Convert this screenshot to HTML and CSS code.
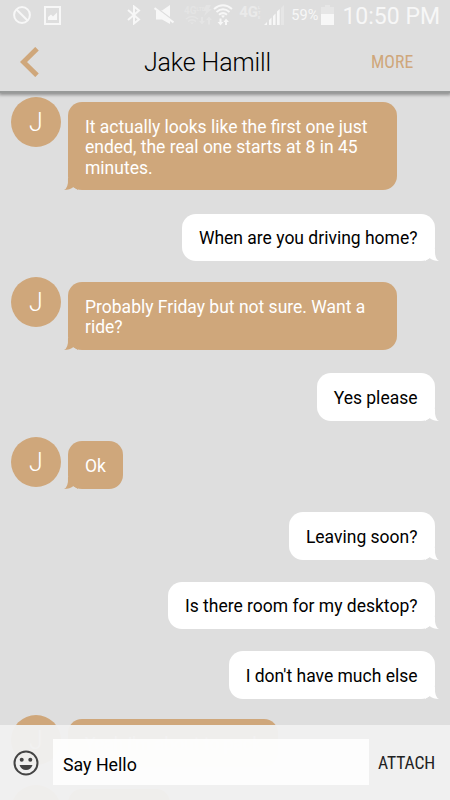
FILE: index.html
```html
<!DOCTYPE html>
<html lang="en">
<head>
    <meta charset="UTF-8">
    <meta name="viewport" content="width=device-width, initial-scale=1.0">
    <title>Jake Hamill</title>
    <link rel="stylesheet" href="styles.css">
</head>
<body>
    <div class="screen">
        <header class="header">
            <div class="status-bar">
                <svg class="icon-block" width="18" height="18" viewBox="0 0 18 18"><circle cx="9" cy="9" r="7.9"/><path d="M3.5 3.5L14.5 14.5"/></svg>
                <svg class="icon-image" width="17" height="19" viewBox="0 0 17 19"><path fill-rule="evenodd" d="M0 0H17V19H0ZM2 2V17H15V2Z"/><path d="M4 14V11L7 8.5L9 10.5L13 6.5V14Z"/></svg>
                <svg class="icon-bluetooth" width="14" height="20" viewBox="0 0 14 20"><path d="M1 5L12 14.5L7 18.5V1.5L12 5.5L1 15"/></svg>
                <svg class="icon-mute" width="20" height="20" viewBox="0 0 20 20"><path d="M2 5.500H8L16 0V19L8 14.500H2Z"/><path class="gap" d="M0 1.200L20 16.200"/><path class="slash" d="M.5 3L19.500 17.500"/></svg>
                <div class="booster">
                    <span>4G<small>LTE</small></span>
                    <svg width="29" height="20" viewBox="0 0 29 20"><path class="fill" d="M22 0H27L25 4H28L20 11L22 6H19Z"/><path d="M2 14Q8 9 14 14M4 16.5Q8 13 12 16.5"/><path class="fill" d="M8 19.5L6 17.5H10ZM17 12H19V16H21L18 19.5L15 16H17ZM24 19.5H26V15H28L25 11.5L22 15H24Z"/></svg>
                </div>
                <svg class="icon-wifi" width="20" height="22" viewBox="0 0 20 22"><path d="M1 5Q10 -2.500 19 5M3.500 8Q10 2.500 16.500 8M6 10.800Q10 7.500 14 10.800"/><path class="fill" d="M10 14L8 11.800Q10 10.500 12 11.800ZM6.500 18V14.500H8.500V18H10.500L7.500 21.500L4.500 18ZM12 21V18H10.500L13 14.500L16 18H14V21Z"/></svg>
                <div class="network">4G<span><i>L</i><i>T</i><i>E</i></span></div>
                <svg class="icon-signal" width="20" height="20" viewBox="0 0 20 20"><path d="M0 20L3 17V20ZM5 20V15L7.5 12.5V20ZM9 20V11L11.5 8.5V20ZM13 20V6.5L15.7 4V20Z"/><path opacity=".35" d="M17 20V3L20 0V20Z"/></svg>
                <span class="battery-level">59%</span>
                <svg class="icon-battery" width="13" height="20" viewBox="0 0 13 20"><path opacity=".35" d="M4 0H9V2H13V9H0V2H4Z"/><path d="M0 9H13V20H0Z"/></svg>
                <span class="clock">10:50 PM</span>
            </div>
            <div class="nav">
                <svg class="back" width="19" height="30" viewBox="0 0 19 30"><path d="M17 1.700L3.500 15L17 28.300"/></svg>
                <h1>Jake Hamill</h1>
                <a class="more">MORE</a>
            </div>
        </header>

        <main class="messages">
            <div class="row them">
                <div class="avatar">J</div>
                <div class="bubble">It actually looks like the first one just ended, the real one starts at 8 in 45 minutes.<svg class="tail" width="14" height="12" viewBox="0 0 14 12"><path d="M4 0Q4.500 10 0 12Q6 12 9.500 9L14 12V0Z"/></svg></div>
            </div>
            <div class="row me">
                <div class="bubble">When are you driving home?<svg class="tail" width="14" height="12" viewBox="0 0 14 12"><path d="M4 0Q4.500 10 0 12Q6 12 9.500 9L14 12V0Z"/></svg></div>
            </div>
            <div class="row them">
                <div class="avatar">J</div>
                <div class="bubble">Probably Friday but not sure. Want a ride?<svg class="tail" width="14" height="12" viewBox="0 0 14 12"><path d="M4 0Q4.500 10 0 12Q6 12 9.500 9L14 12V0Z"/></svg></div>
            </div>
            <div class="row me">
                <div class="bubble">Yes please<svg class="tail" width="14" height="12" viewBox="0 0 14 12"><path d="M4 0Q4.500 10 0 12Q6 12 9.500 9L14 12V0Z"/></svg></div>
            </div>
            <div class="row them">
                <div class="avatar">J</div>
                <div class="bubble">Ok<svg class="tail" width="14" height="12" viewBox="0 0 14 12"><path d="M4 0Q4.500 10 0 12Q6 12 9.500 9L14 12V0Z"/></svg></div>
            </div>
            <div class="row me">
                <div class="bubble">Leaving soon?<svg class="tail" width="14" height="12" viewBox="0 0 14 12"><path d="M4 0Q4.500 10 0 12Q6 12 9.500 9L14 12V0Z"/></svg></div>
            </div>
            <div class="row me">
                <div class="bubble">Is there room for my desktop?<svg class="tail" width="14" height="12" viewBox="0 0 14 12"><path d="M4 0Q4.500 10 0 12Q6 12 9.500 9L14 12V0Z"/></svg></div>
            </div>
            <div class="row me">
                <div class="bubble">I don't have much else<svg class="tail" width="14" height="12" viewBox="0 0 14 12"><path d="M4 0Q4.500 10 0 12Q6 12 9.500 9L14 12V0Z"/></svg></div>
            </div>
            <div class="row them last">
                <div class="avatar">J</div>
                <div class="bubble">Yeah I'm about to pack<svg class="tail" width="14" height="12" viewBox="0 0 14 12"><path d="M4 0Q4.500 10 0 12Q6 12 9.500 9L14 12V0Z"/></svg></div>
            </div>
            <div class="row them">
                <div class="avatar"></div>
                <div class="bubble loading"></div>
            </div>
        </main>

        <footer class="composer">
            <svg class="smiley" width="26" height="26" viewBox="0 0 26 26"><circle class="face" cx="13" cy="13" r="11.500"/><circle cx="8.700" cy="9.700" r="2"/><circle cx="17.300" cy="9.700" r="2"/><path d="M6.500 15H19.500Q17.800 20 13 20T6.500 15Z"/></svg>
            <div class="message-input">Say Hello</div>
            <a class="attach">ATTACH</a>
        </footer>
    </div>
</body>
</html>
```
FILE: styles.css
```css
* {
    box-sizing: border-box;
}
body {
    margin: 0;
    font-family: Roboto, sans-serif;
    background-color: #dedede;
    color: #000;
}
.screen {
    position: relative;
    display: flex;
    flex-direction: column;
    width: 450px;
    height: 800px;
    overflow: hidden;
}
.header {
    height: 91px;
    flex: none;
    background: #dedede;
    box-shadow: 0 2px 0 #989a99, 0 3px 3px 1px rgba(0, 0, 0, 0.35);
    z-index: 1;
}
.status-bar {
    display: flex;
    height: 32px;
    padding: 5px 10px 0 13px;
    color: #f7f7f7;
    fill: #f7f7f7;
}
.status-bar svg {
    flex: none;
}
.icon-block, .icon-bluetooth, .icon-wifi {
    fill: none;
    stroke: #f7f7f7;
    stroke-width: 2;
}
.icon-block {
    margin: 1px 13px 0 0;
}
.icon-image {
    margin: 1px 66px 0 0;
}
.icon-bluetooth {
    margin-right: 13px;
}
.icon-mute {
    margin: 0 10px 0 0;
}
.icon-mute .gap {
    stroke: #dedede;
    stroke-width: 2;
}
.icon-mute .slash {
    stroke: #f7f7f7;
    stroke-width: 2;
}
.booster {
    position: relative;
    width: 29px;
    margin-right: 1px;
    opacity: 0.25;
}
.booster svg {
    position: absolute;
    left: 0;
    top: 0;
}
.booster path {
    fill: none;
    stroke: #f7f7f7;
    stroke-width: 1.5;
}
.booster path.fill, .icon-wifi .fill {
    fill: #f7f7f7;
    stroke: none;
}
.booster span {
    display: block;
    font-size: 10px;
    line-height: 9px;
    font-weight: bold;
}
.icon-wifi {
    margin: -1px 6px 0 0;
}
small {
    font-size: 5px;
    vertical-align: 3px;
}
.network {
    display: flex;
    width: 26px;
    opacity: 0.5;
    font-size: 15px;
    line-height: 14px;
    font-weight: bold;
}
.network span {
    display: flex;
    flex-direction: column;
}
.network i {
    font-size: 4px;
    font-style: normal;
    line-height: 5px;
}
.icon-signal {
    margin-right: 7px;
}
.battery-level {
    width: 31px;
    font-size: 14.5px;
    line-height: 22px;
}
.icon-battery {
    margin-right: 8px;
}
.clock {
    font-size: 23px;
    line-height: 24px;
    white-space: nowrap;
}
.nav {
    display: flex;
    align-items: center;
    height: 59px;
    padding: 0 37px 0 20px;
}
.back {
    fill: none;
    stroke: #cfa77b;
    stroke-width: 5;
}
.nav h1 {
    flex: 1;
    margin: 0;
    padding: 2px 0 0 5px;
    font-size: 25px;
    font-weight: 300;
    line-height: 30px;
    text-align: center;
    letter-spacing: -0.1px;
}
.more {
    width: 42px;
    font-family: "Roboto Condensed", Roboto, sans-serif;
    font-stretch: condensed;
    font-size: 17.7px;
    color: #cfa77b;
}
.messages {
    display: flex;
    flex-direction: column;
    padding: 6px 15px 0 11px;
}
.row {
    display: flex;
    flex: none;
    margin-bottom: 22px;
}
.them {
    margin-bottom: 23.5px;
}
.me + .them {
    margin-top: -6px;
}
.last {
    margin-bottom: 18px;
}
.me {
    justify-content: flex-end;
}
.avatar {
    flex: none;
    width: 50px;
    height: 50px;
    margin-right: 7px;
    border-radius: 50%;
    background: #cfa77b;
    color: #fff;
    font-size: 25px;
    font-weight: 300;
    line-height: 51px;
    text-align: center;
}
.bubble {
    position: relative;
    max-width: 329px;
    padding: 15px 17px 12px;
    border-radius: 14px;
    background: #fff;
    fill: #fff;
    font-size: 17.5px;
    line-height: 20.5px;
}
.me .bubble {
    padding: 14.5px 17.5px 12.5px 17px;
}
.them .bubble {
    margin-top: 4.5px;
    background: #cfa77b;
    fill: #cfa77b;
    color: #fff;
}
.loading {
    width: 102px;
}
.tail {
    position: absolute;
    bottom: 0;
    left: -4px;
}
.me .tail {
    left: auto;
    right: -4px;
    transform: scaleX(-1);
}
.composer {
    position: absolute;
    left: 0;
    right: 0;
    bottom: 0;
    z-index: 1;
    display: flex;
    align-items: center;
    height: 75px;
    padding: 0 15px 0 13px;
    background: rgba(240, 240, 240, 0.96);
}
.smiley {
    flex: none;
    fill: #444;
}
.smiley .face {
    fill: none;
    stroke: #444;
    stroke-width: 2;
}
.message-input {
    flex: none;
    width: 316px;
    height: 46px;
    margin: -1px 0 0 14px;
    padding-left: 10px;
    background: rgba(255, 255, 255, 0.85);
    font-size: 17.8px;
    line-height: 52px;
}
.attach {
    margin-left: 9px;
    font-family: "Roboto Condensed", Roboto, sans-serif;
    font-stretch: condensed;
    font-size: 17.6px;
    letter-spacing: -0.1px;
    color: #222;
}
```
